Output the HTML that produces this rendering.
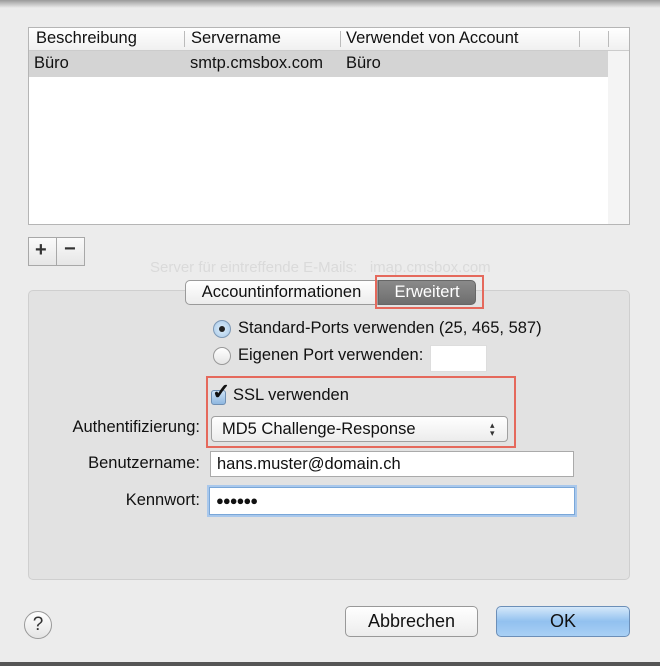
<!DOCTYPE html>
<html><head><meta charset="utf-8"><style>
*{box-sizing:border-box;margin:0;padding:0}
body{width:660px;height:666px;overflow:hidden;background:#ececec;font-family:"Liberation Sans",sans-serif;font-size:16.5px;color:#111;position:relative}
.a{position:absolute;white-space:nowrap}
.ghost{color:#dadada;font-size:15px}
.lbl{right:460px;text-align:right}
</style></head><body>
<div class="a" style="left:0;top:0;width:660px;height:8px;background:linear-gradient(#9a9a9a,#ececec)"></div>
<div class="a" style="left:0;top:662px;width:660px;height:4px;background:#555"></div>
<div class="a ghost" style="left:150px;top:259px">Server für eintreffende E-Mails: &nbsp; imap.cmsbox.com</div>
<div class="a ghost" style="left:270px;top:296px">Benutzername: &nbsp; hans.muster@domain.ch</div>
<div class="a ghost" style="left:520px;top:416px">rver verwenden</div>
<!-- table -->
<div class="a" style="left:28px;top:27px;width:602px;height:198px;background:#fff;border:1px solid #b5b5b5">
 <div class="a" style="left:0;top:0;width:600px;height:23px;background:linear-gradient(#fff,#f0f0f0);border-bottom:1px solid #ccc"></div>
 <div class="a" style="left:7px;top:1px">Beschreibung</div>
 <div class="a" style="left:155px;top:3px;height:16px;border-left:1px solid #bbb"></div>
 <div class="a" style="left:162px;top:1px">Servername</div>
 <div class="a" style="left:311px;top:3px;height:16px;border-left:1px solid #bbb"></div>
 <div class="a" style="left:317px;top:1px">Verwendet von Account</div>
 <div class="a" style="left:550px;top:3px;height:16px;border-left:1px solid #bbb"></div>
 <div class="a" style="left:579px;top:3px;height:16px;border-left:1px solid #bbb"></div>
 <div class="a" style="left:0;top:23px;width:579px;height:26px;background:#d4d4d4"></div>
 <div class="a" style="left:579px;top:23px;width:21px;height:173px;background:#f4f4f4"></div>
 <div class="a" style="left:5px;top:26px">Büro</div>
 <div class="a" style="left:161px;top:26px">smtp.cmsbox.com</div>
 <div class="a" style="left:317px;top:26px">Büro</div>
</div>
<!-- +/- -->
<div class="a" style="left:28px;top:237px;width:57px;height:29px;background:linear-gradient(#fafafa,#e6e6e6);border:1px solid #a8a8a8"></div>
<div class="a" style="left:56px;top:238px;height:27px;border-left:1px solid #a8a8a8"></div>
<div class="a" style="left:35px;top:239px;font-size:20px;font-weight:bold;color:#333">+</div>
<div class="a" style="left:64px;top:238px;font-size:20px;font-weight:bold;color:#333">−</div>
<!-- panel -->
<div class="a" style="left:28px;top:290px;width:602px;height:290px;background:#e2e2e2;border:1px solid #cfcfcf;border-radius:5px"></div>
<!-- tabs -->
<div class="a" style="left:185px;top:280px;width:193px;height:25px;background:linear-gradient(#fff,#ececec);border:1px solid #9a9a9a;border-radius:5px 0 0 5px;text-align:center;line-height:23px">Accountinformationen</div>
<div class="a" style="left:378px;top:280px;width:98px;height:25px;background:linear-gradient(#8a8a8a,#6e6e6e);border:1px solid #666;border-radius:0 5px 5px 0;text-align:center;line-height:23px;color:#fff">Erweitert</div>
<div class="a" style="left:375px;top:275px;width:109px;height:34px;border:2px solid #e5695c"></div>
<!-- radios -->
<div class="a" style="left:213px;top:320px;width:18px;height:18px;border-radius:50%;background:radial-gradient(#dfeefa,#a6c8e8);border:1px solid #7d98b5"></div>
<div class="a" style="left:219px;top:326px;width:6px;height:6px;border-radius:50%;background:#222"></div>
<div class="a" style="left:238px;top:319px">Standard-Ports verwenden (25, 465, 587)</div>
<div class="a" style="left:213px;top:347px;width:18px;height:18px;border-radius:50%;background:linear-gradient(#fff,#e5e5e5);border:1px solid #999"></div>
<div class="a" style="left:238px;top:346px">Eigenen Port verwenden:</div>
<div class="a" style="left:430px;top:345px;width:57px;height:27px;background:#fff;border:1px solid #ddd"></div>
<!-- red box 2 -->
<div class="a" style="left:206px;top:376px;width:310px;height:72px;border:2px solid #e5695c"></div>
<div class="a" style="left:211px;top:390px;width:15px;height:15px;border-radius:3px;background:linear-gradient(#cde2f6,#8fb7e0);border:1px solid #6f8fb3"></div>
<div class="a" style="left:212px;top:379px;font-size:22px;font-weight:bold;color:#111">✓</div>
<div class="a" style="left:233px;top:386px">SSL verwenden</div>
<div class="a lbl" style="top:418px">Authentifizierung:</div>
<div class="a" style="left:211px;top:416px;width:297px;height:26px;background:linear-gradient(#fff,#ececec);border:1px solid #a0a0a0;border-radius:4px;padding-left:10px;line-height:24px">MD5 Challenge-Response</div>
<div class="a" style="left:490px;top:421px;font-size:9px;line-height:8px;color:#333">▴<br>▾</div>
<div class="a lbl" style="top:454px">Benutzername:</div>
<div class="a" style="left:210px;top:451px;width:364px;height:26px;background:#fff;border:1px solid #aaa;padding-left:6px;line-height:24px">hans.muster@domain.ch</div>
<div class="a lbl" style="top:491px">Kennwort:</div>
<div class="a" style="left:209px;top:487px;width:366px;height:28px;background:#fff;border:1px solid #7aa7d8;box-shadow:0 0 0 2px #a9c8ec;padding-left:6px;line-height:26px;font-size:13px;letter-spacing:-1px">●●●●●●</div>
<!-- help -->
<div class="a" style="left:24px;top:611px;width:28px;height:28px;border-radius:50%;background:linear-gradient(#fff,#e4e4e4);border:1px solid #999;text-align:center;line-height:26px;font-size:19px;color:#333">?</div>
<div class="a" style="left:345px;top:606px;width:133px;height:31px;background:linear-gradient(#fff,#ececec);border:1px solid #999;border-radius:5px;text-align:center;line-height:29px;font-size:18px">Abbrechen</div>
<div class="a" style="left:496px;top:606px;width:134px;height:31px;background:linear-gradient(#d5e8fa,#92c1ef 50%,#a9d0f5);border:1px solid #6c8fb8;border-radius:5px;text-align:center;line-height:29px;font-size:18px">OK</div>
</body></html>
